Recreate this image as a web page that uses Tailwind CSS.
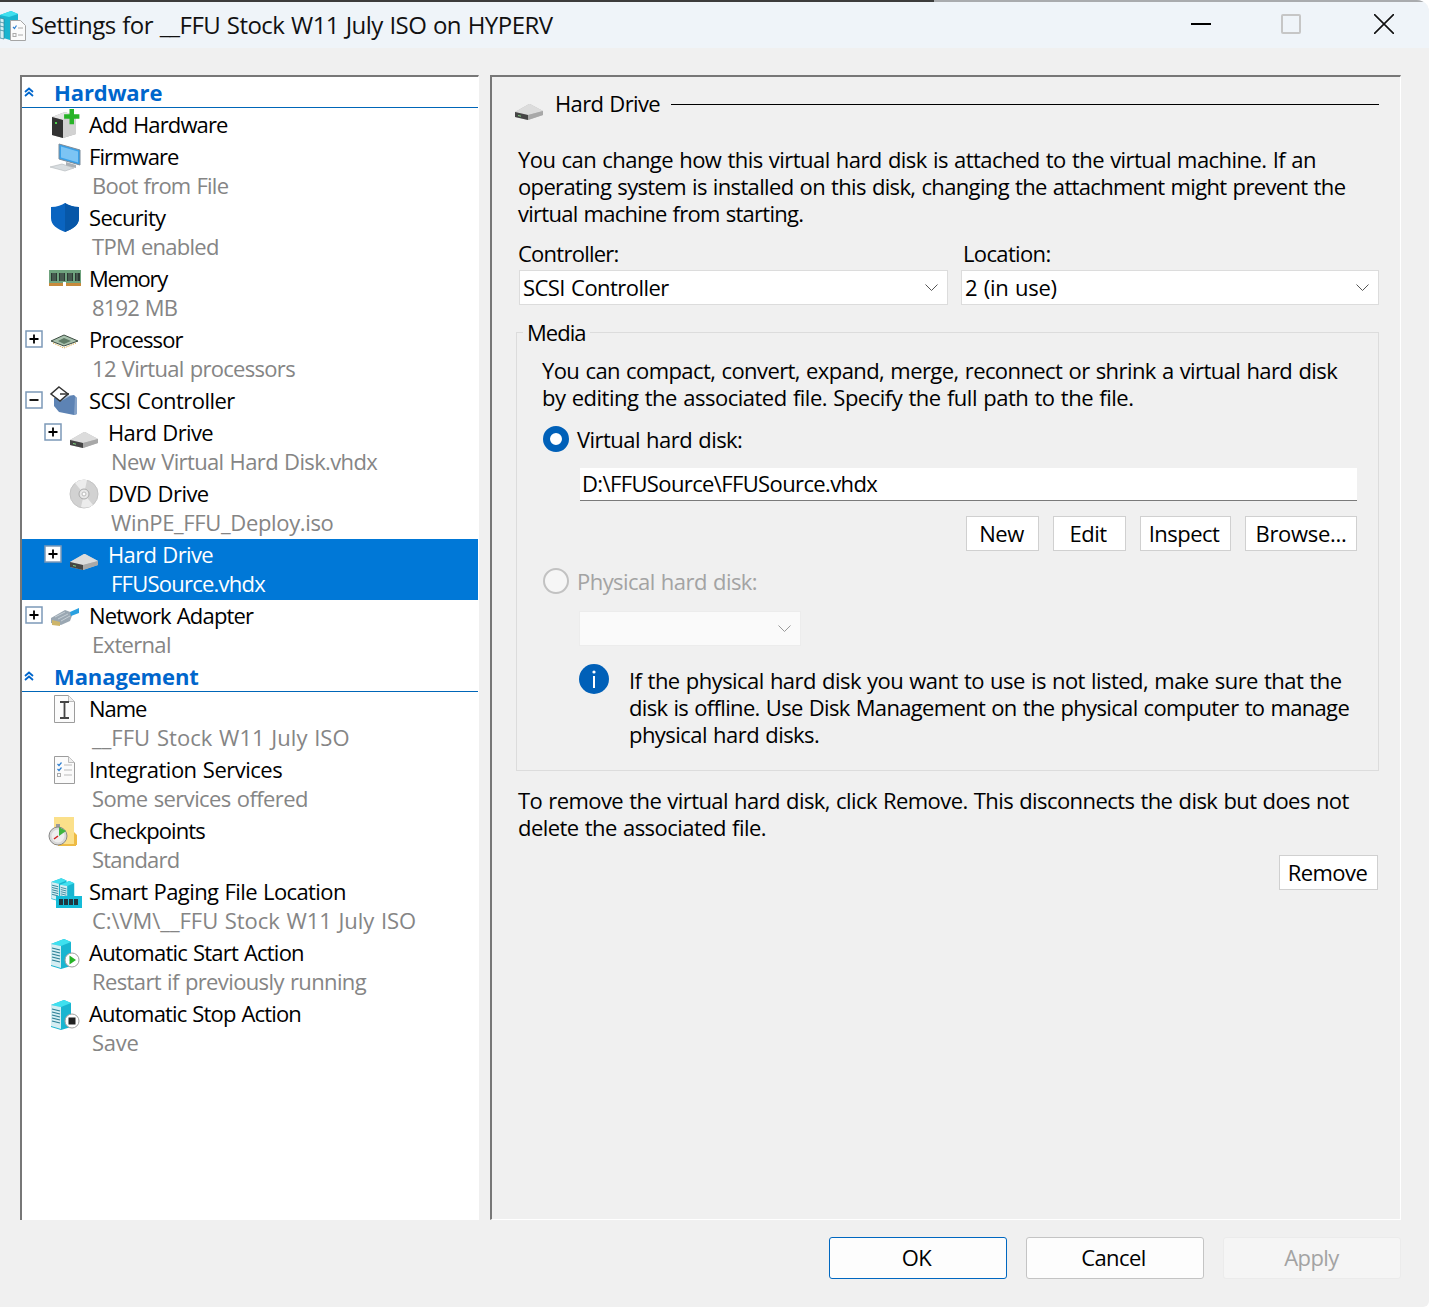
<!DOCTYPE html>
<html lang="en">

<head>
    <meta charset="UTF-8">
    <title>Settings for __FFU Stock W11 July ISO on HYPERV</title>
    <script src="https://cdn.jsdelivr.net/npm/@tailwindcss/browser@4"></script>
</head>

<body class="bg-white font-['Open_Sans',sans-serif] text-[22px] tracking-[-0.55px] [word-spacing:1px] text-black">
    <!-- shared icons -->
    <svg class="hidden">
        <symbol id="plus" viewBox="0 0 18 18">
            <rect x="1" y="1" width="16" height="16" fill="#fff" stroke="#7c99b8" stroke-width="1.5" />
            <path d="M4.5 9h9M9 4.5v9" stroke="#000" stroke-width="1.8" />
        </symbol>
        <symbol id="minus" viewBox="0 0 18 18">
            <rect x="1" y="1" width="16" height="16" fill="#fff" stroke="#7c99b8" stroke-width="1.5" />
            <path d="M4.5 9h9" stroke="#000" stroke-width="1.8" />
        </symbol>
        <symbol id="hdd" viewBox="0 0 34 34">
            <path d="M3 24l14-8h1l13 7v4l-15 5-13-3z" fill="#bdbdbd" />
            <path d="M3 24l14-8h1l13 7-15 4z" fill="#dcdcdc" />
            <path d="M3 24l13 3v5L3 29z" fill="#454545" />
            <path d="M16 27l15-4v4l-15 5z" fill="#a8a8a8" />
            <path d="M6 27.500l3 .7" stroke="#7fd07f" stroke-width="1" />
        </symbol>
        <symbol id="server" viewBox="0 0 34 34">
            <path d="M3 8l13-5 7 3v24l-10 3-10-3z" fill="#19b5d0" />
            <path d="M3 8l13-5 7 3-10 4z" fill="#3fe0ef" />
            <path d="M3 8l10 2v22L3 29z" fill="#d5eef3" />
            <path d="M4 12l8 2M4 15l8 2M4 18l8 2M4 21l8 2M4 24l8 2" stroke="#2b7f95" stroke-width="1.2" />
        </symbol>
        <symbol id="doc" viewBox="0 0 34 34">
            <path d="M6.5 3.5h14l6 6v21h-20z" fill="#fbfbfb" stroke="#9c9c9c" />
            <path d="M20.5 3.5v6h6" fill="#eee" stroke="#bbb" />
        </symbol>
    </svg>

    <div class="w-[1429px] h-[1307px] bg-[#f0f0f0] rounded-tr-[12px] rounded-br-[6px] overflow-hidden flex flex-col">
        <!-- title bar -->
        <div class="h-[48px] bg-[#eff4f9] border-t-2 border-[#a9abae] relative flex items-center">
            <div class="absolute left-0 -top-[2px] w-[934px] h-[2px] bg-[#3c3c3c]"></div>
            <svg class="w-[27px] h-[32px] ml-0 -mb-[3px] shrink-0" viewBox="0 0 27 32">
                <path d="M0 4l11-4 7 3v24l-8 2-10-3z" fill="#19b5d0" />
                <path d="M0 4l11-4 7 3-9 3z" fill="#3fe0ef" />
                <path d="M0 7l4 1v20l-4-1zM0 11l4 1M0 15l4 1M0 19l4 1" fill="#d5eef3" stroke="#2b7f95" stroke-width=".7" />
                <path d="M10.500 9.500h10l5 5v15h-15z" fill="#fbfbfb" stroke="#a5a5a5" />
                <path d="M13 16l1.500 1.500 2-3" fill="none" stroke="#2f7fd0" stroke-width="1.200" />
                <path d="M18 17h5M18 24h5" stroke="#aaa" />
                <rect x="13" y="22.500" width="3" height="3" fill="none" stroke="#aaa" />
            </svg>
            <div class="ml-[4px] text-[24px] tracking-[-0.55px] text-[#111]">Settings for __FFU Stock W11 July ISO on HYPERV</div>
            <div class="ml-auto flex items-center">
                <div class="w-[20px] h-[2px] bg-black mr-[70px] -mt-[2px]"></div>
                <div class="w-[20px] h-[20px] border-2 border-[#c6c6c6] rounded-[2px] mr-[73px] -mt-[2px]"></div>
                <svg class="w-[20px] h-[20px] mr-[35px] -mt-[2px]" viewBox="0 0 20 20">
                    <path d="M0 0l20 20M20 0L0 20" stroke="#111" stroke-width="1.600" />
                </svg>
            </div>
        </div>

        <!-- panels -->
        <div class="flex gap-[11px] pl-[20px] pt-[27px]">
            <!-- left tree -->
            <div class="w-[459px] h-[1145px] bg-white border-l-2 border-t-2 border-r border-l-[#777] border-t-[#777] border-r-white leading-[30px]">
                <div class="h-[32px] pb-[1px]">
                    <div class="h-[31px] border-b border-[#0066b8] flex items-center">
                        <svg class="w-[10px] h-[10px] ml-[2px]" viewBox="0 0 10 10">
                            <path d="M1 5l4-3.500L9 5M1 9l4-3.500L9 9" fill="none" stroke="#0066cc" stroke-width="1.800" />
                        </svg>
                        <div class="ml-[20px] font-bold text-[#0066cc] tracking-[-0.1px]">Hardware</div>
                    </div>
                </div>

                <div class="h-[32px] flex items-center pl-[26px]">
                    <svg class="w-[34px] h-[34px] shrink-0" viewBox="0 0 34 34">
                        <path d="M4 9l13-5 11 4v18l-13 4-11-3z" fill="#a8a8a8" />
                        <path d="M4 9l13-5 11 4-13 4z" fill="#e4e4e4" />
                        <path d="M15 12l13-4v18l-13 4z" fill="#d2d2d2" />
                        <path d="M4 9l11 3v18L4 27z" fill="#333" />
                        <rect x="7" y="14" width="2" height="2" fill="#4cd04c" />
                        <path d="M25 1h5v6h6v5h-6v6h-5v-6h-6V7h6z" fill="#27b427" transform="translate(-1 0) scale(.9)" />
                    </svg>
                    <div class="ml-[7px] pb-[2px] tracking-[-0.88px]">Add Hardware</div>
                </div>

                <div class="h-[61px]">
                    <div class="h-[32px] flex items-center pl-[26px]">
                        <svg class="w-[34px] h-[34px] shrink-0" viewBox="0 0 34 34">
                            <path d="M11 4l21 6v15l-21-6z" fill="#39a0e8" stroke="#7d8c99" />
                            <path d="M13 6.500l17 5v11l-17-5z" fill="#7cc4f4" />
                            <path d="M18 22l10 3v3l-10-2z" fill="#aab0b5" />
                            <path d="M2 27l12-3 12 4-9 3z" fill="#d8dde0" stroke="#b0b5b8" stroke-width=".6" />
                        </svg>
                        <div class="ml-[7px] pb-[2px] tracking-[-0.92px]">Firmware</div>
                    </div>
                    <div class="h-[26px] leading-[24px] pl-[70px] text-[#858585] tracking-[-0.75px]">Boot from File</div>
                </div>

                <div class="h-[61px]">
                    <div class="h-[32px] flex items-center pl-[26px]">
                        <svg class="w-[34px] h-[34px] shrink-0" viewBox="0 0 34 34">
                            <path d="M17 2c3 2 8 4 14 4v11c0 7-6 11-14 14C9 28 3 24 3 17V6c6 0 11-2 14-4z" fill="#0a64c0" />
                            <path d="M17 2c3 2 8 4 14 4v11c0 7-6 11-14 14z" fill="#0757a8" />
                        </svg>
                        <div class="ml-[7px] pb-[2px] tracking-[-0.68px]">Security</div>
                    </div>
                    <div class="h-[26px] leading-[24px] pl-[70px] text-[#858585] tracking-[-0.73px]">TPM enabled</div>
                </div>

                <div class="h-[61px]">
                    <div class="h-[32px] flex items-center pl-[26px]">
                        <svg class="w-[34px] h-[34px] shrink-0" viewBox="0 0 34 34">
                            <rect x="1" y="8" width="32" height="16" fill="#6fa37e" />
                            <rect x="1" y="21" width="32" height="3" fill="#c78a3c" />
                            <path d="M3 11h6v8H3zM11 11h6v8h-6zM19 11h6v8h-6zM27 11h5v8h-5z" fill="#2c3a33" />
                            <path d="M5 11v8M7 11v8M13 11v8M15 11v8M21 11v8M23 11v8M29 11v8" stroke="#7a9a85" stroke-width=".7" />
                            <rect x="15" y="20" width="3" height="4" fill="#fff" />
                        </svg>
                        <div class="ml-[7px] pb-[2px] tracking-[-1.3px]">Memory</div>
                    </div>
                    <div class="h-[26px] leading-[24px] pl-[70px] text-[#858585] tracking-[-0.85px]">8192 MB</div>
                </div>

                <div class="h-[61px]">
                    <div class="h-[32px] flex items-center pl-[3px]">
                        <svg class="w-[18px] h-[18px] -mt-[2px] shrink-0"><use href="#plus" /></svg>
                        <svg class="w-[34px] h-[34px] ml-[5px] shrink-0" viewBox="0 0 34 34">
                            <path d="M3 18l13-6 14 6-14 5z" fill="#a9c2ae" stroke="#3d4d42" />
                            <path d="M10 18l6-3 7 3-7 3z" fill="#5f7c66" />
                            <path d="M5 20l11 5 12-5" fill="none" stroke="#d0a030" stroke-dasharray="1 1" />
                        </svg>
                        <div class="ml-[7px] pb-[2px] tracking-[-0.88px]">Processor</div>
                    </div>
                    <div class="h-[26px] leading-[24px] pl-[70px] text-[#858585] tracking-[-0.7px]">12 Virtual processors</div>
                </div>

                <div class="h-[32px] flex items-center pl-[3px]">
                    <svg class="w-[18px] h-[18px] -mt-[2px] shrink-0"><use href="#minus" /></svg>
                    <svg class="w-[34px] h-[34px] ml-[5px] shrink-0" viewBox="0 0 34 34">
                        <path d="M6 14l20-3 3 3v16l-3 1-15-3-5-6z" fill="#5d83b4" />
                        <path d="M27 13l2 1v16l-3 1z" fill="#86a3c8" />
                        <path d="M14 9l8 3-9 5z" fill="#a9c0da" />
                        <path d="M11 3l9 7-8 7-9-7z" fill="#fff" stroke="#333" stroke-width="1.500" />
                        <path d="M12 10h9" stroke="#333" stroke-width="1.500" />
                    </svg>
                    <div class="ml-[7px] pb-[2px]">SCSI Controller</div>
                </div>

                <div class="h-[61px]">
                    <div class="h-[32px] flex items-center pl-[22px]">
                        <svg class="w-[18px] h-[18px] -mt-[2px] shrink-0"><use href="#plus" /></svg>
                        <svg class="w-[34px] h-[34px] ml-[5px] shrink-0"><use href="#hdd" /></svg>
                        <div class="ml-[7px] pb-[2px] tracking-[-0.65px]">Hard Drive</div>
                    </div>
                    <div class="h-[26px] leading-[24px] pl-[89px] text-[#858585] tracking-[-0.63px]">New Virtual Hard Disk.vhdx</div>
                </div>

                <div class="h-[61px]">
                    <div class="h-[32px] flex items-center pl-[45px]">
                        <svg class="w-[34px] h-[34px] shrink-0" viewBox="0 0 34 34">
                            <circle cx="17" cy="17" r="14" fill="#d2d2d2" stroke="#c4c4c4" />
                            <path d="M17 17L8 6a14 14 0 0 1 12-3z" fill="#ececec" />
                            <path d="M17 17l9 11a14 14 0 0 1-12 2z" fill="#ececec" />
                            <circle cx="17" cy="17" r="5" fill="#e8e8e8" stroke="#aaa" />
                            <circle cx="17" cy="17" r="2" fill="#fff" stroke="#bbb" />
                        </svg>
                        <div class="ml-[7px] pb-[2px]">DVD Drive</div>
                    </div>
                    <div class="h-[26px] leading-[24px] pl-[89px] text-[#858585] tracking-[-0.35px]">WinPE_FFU_Deploy.iso</div>
                </div>

                <div class="h-[61px] bg-[#0078d7] text-white">
                    <div class="h-[32px] flex items-center pl-[22px]">
                        <svg class="w-[18px] h-[18px] -mt-[2px] shrink-0"><use href="#plus" /></svg>
                        <svg class="w-[34px] h-[34px] ml-[5px] shrink-0"><use href="#hdd" /></svg>
                        <div class="ml-[7px] pb-[2px] tracking-[-0.65px]">Hard Drive</div>
                    </div>
                    <div class="h-[26px] leading-[24px] pl-[89px] tracking-[-0.76px]">FFUSource.vhdx</div>
                </div>

                <div class="h-[61px]">
                    <div class="h-[32px] flex items-center pl-[3px]">
                        <svg class="w-[18px] h-[18px] -mt-[2px] shrink-0"><use href="#plus" /></svg>
                        <svg class="w-[34px] h-[34px] ml-[5px] shrink-0" viewBox="0 0 34 34">
                            <path d="M3 19l14-8 8 3-3 8-9 4-10-2z" fill="#9aa7b2" />
                            <path d="M7 18l10-5M10 20l10-5M13 22l9-5" stroke="#c5ced5" />
                            <path d="M4 21l8 2v4l-8-1z" fill="#cdb56a" />
                            <path d="M22 13l9-4v5l-8 3z" fill="#2aa0e0" />
                        </svg>
                        <div class="ml-[7px] pb-[2px] tracking-[-0.82px]">Network Adapter</div>
                    </div>
                    <div class="h-[26px] leading-[24px] pl-[70px] text-[#858585] tracking-[-0.68px]">External</div>
                </div>

                <div class="h-[32px] pb-[1px]">
                    <div class="h-[31px] border-b border-[#0066b8] flex items-center">
                        <svg class="w-[10px] h-[10px] ml-[2px]" viewBox="0 0 10 10">
                            <path d="M1 5l4-3.500L9 5M1 9l4-3.500L9 9" fill="none" stroke="#0066cc" stroke-width="1.800" />
                        </svg>
                        <div class="ml-[20px] font-bold text-[#0066cc] tracking-[-0.1px]">Management</div>
                    </div>
                </div>

                <div class="h-[61px]">
                    <div class="h-[32px] flex items-center pl-[26px]">
                        <svg class="w-[34px] h-[34px] shrink-0" viewBox="0 0 34 34">
                            <use href="#doc" />
                            <path d="M12 10h9M12 26h9M16.500 10v16" stroke="#444" stroke-width="1.800" />
                        </svg>
                        <div class="ml-[7px] pb-[2px] tracking-[-1.05px]">Name</div>
                    </div>
                    <div class="h-[26px] leading-[24px] pl-[70px] text-[#858585] tracking-[0.03px]">__FFU Stock W11 July ISO</div>
                </div>

                <div class="h-[61px]">
                    <div class="h-[32px] flex items-center pl-[26px]">
                        <svg class="w-[34px] h-[34px] shrink-0" viewBox="0 0 34 34">
                            <use href="#doc" />
                            <path d="M9.500 11l1.500 1.500 2.500-3M9.500 16l1.500 1.500 2.500-3" fill="none" stroke="#2f7fd0" stroke-width="1.200" />
                            <rect x="9.500" y="20.500" width="3" height="3" fill="none" stroke="#aaa" />
                            <path d="M16 12h8M16 17h8M16 22h8" stroke="#bbb" />
                        </svg>
                        <div class="ml-[7px] pb-[2px] tracking-[-0.5px]">Integration Services</div>
                    </div>
                    <div class="h-[26px] leading-[24px] pl-[70px] text-[#858585] tracking-[-0.6px]">Some services offered</div>
                </div>

                <div class="h-[61px]">
                    <div class="h-[32px] flex items-center pl-[26px]">
                        <svg class="w-[34px] h-[34px] shrink-0" viewBox="0 0 34 34">
                            <path d="M6 3h20v28H6z" fill="#fbe08a" />
                            <path d="M26 18l3 3v10h-3z" fill="#eebb44" />
                            <path d="M10 31h18" stroke="#eebb44" stroke-width="2" />
                            <rect x="8" y="10" width="4" height="3" fill="#999" />
                            <circle cx="10" cy="22" r="9" fill="#d8d8d8" stroke="#888" />
                            <circle cx="10" cy="22" r="6.500" fill="#eeeeee" />
                            <path d="M11 13l7 4-7 5z" fill="#3fb53f" />
                            <path d="M10 22l-4 3" stroke="#d02020" stroke-width="1.500" />
                        </svg>
                        <div class="ml-[7px] pb-[2px] tracking-[-0.91px]">Checkpoints</div>
                    </div>
                    <div class="h-[26px] leading-[24px] pl-[70px] text-[#858585] tracking-[-0.8px]">Standard</div>
                </div>

                <div class="h-[61px]">
                    <div class="h-[32px] flex items-center pl-[26px]">
                        <svg class="w-[34px] h-[34px] shrink-0" viewBox="0 0 34 34">
                            <use href="#server" width="26" height="28" x="1" y="0" />
                            <use href="#server" width="24" height="28" x="10" y="2" />
                            <rect x="8" y="21" width="26" height="12" fill="#15bcd8" />
                            <path d="M11 24h4v6h-4zM16 24h4v6h-4zM21 24h4v6h-4zM26 24h4v6h-4z" fill="#1f3640" />
                        </svg>
                        <div class="ml-[7px] pb-[2px] tracking-[-0.6px]">Smart Paging File Location</div>
                    </div>
                    <div class="h-[26px] leading-[24px] pl-[70px] text-[#858585] tracking-[-0.05px]">C:\VM\__FFU Stock W11 July ISO</div>
                </div>

                <div class="h-[61px]">
                    <div class="h-[32px] flex items-center pl-[26px]">
                        <svg class="w-[34px] h-[34px] shrink-0" viewBox="0 0 34 34">
                            <use href="#server" />
                            <circle cx="24" cy="24" r="7" fill="#fff" stroke="#a0a0a0" />
                            <path d="M21.500 19.500l6.500 4.500-6.500 4.500z" fill="#27b427" />
                        </svg>
                        <div class="ml-[7px] pb-[2px] tracking-[-0.78px]">Automatic Start Action</div>
                    </div>
                    <div class="h-[26px] leading-[24px] pl-[70px] text-[#858585] tracking-[-0.62px]">Restart if previously running</div>
                </div>

                <div class="h-[61px]">
                    <div class="h-[32px] flex items-center pl-[26px]">
                        <svg class="w-[34px] h-[34px] shrink-0" viewBox="0 0 34 34">
                            <use href="#server" />
                            <circle cx="24" cy="24" r="7" fill="#fff" stroke="#a0a0a0" />
                            <rect x="20.500" y="20.500" width="7" height="7" fill="#222" />
                        </svg>
                        <div class="ml-[7px] pb-[2px] tracking-[-0.84px]">Automatic Stop Action</div>
                    </div>
                    <div class="h-[26px] leading-[24px] pl-[70px] text-[#858585] tracking-[-0.3px]">Save</div>
                </div>
            </div>

            <!-- right details -->
            <div class="w-[911px] h-[1145px] bg-[#f0f0f0] border-l-2 border-t-2 border-r border-b border-t-[#777] border-l-[#777] border-r-white border-b-white pl-[26px] pr-[21px] pt-[12px] leading-[27px]">
                <div class="h-[30px] flex items-center">
                    <svg class="w-[34px] h-[34px] -ml-[6px] mt-[1px] shrink-0"><use href="#hdd" /></svg>
                    <div class="ml-[9px] mr-[11px] pb-[2px] tracking-[-0.65px]">Hard Drive</div>
                    <div class="flex-1 h-px bg-black"></div>
                </div>

                <p class="mt-[27px]">You can change how this virtual hard disk is attached to the virtual machine. If an<br><span class="tracking-[-0.65px]">operating system is installed on this disk, changing the attachment might prevent the</span><br><span class="tracking-[-0.72px]">virtual machine from starting.</span></p>

                <div class="flex mt-[13px]">
                    <div class="w-[445px] tracking-[-0.75px]">Controller:</div>
                    <div class="tracking-[-0.65px]">Location:</div>
                </div>

                <div class="flex mt-[3px] ml-px">
                    <div class="w-[429px] h-[35px] bg-white border border-[#dcdcdc] flex items-center justify-between pl-[3px] pr-[9px]">
                        <span>SCSI Controller</span>
                        <svg class="w-[13px] h-[8px]" viewBox="0 0 13 8"><path d="M.5.500l6 6 6-6" fill="none" stroke="#555" /></svg>
                    </div>
                    <div class="w-[418px] ml-[13px] h-[35px] bg-white border border-[#dcdcdc] flex items-center justify-between pl-[3px] pr-[9px]">
                        <span class="tracking-[-0.25px]">2 (in use)</span>
                        <svg class="w-[13px] h-[8px]" viewBox="0 0 13 8"><path d="M.5.500l6 6 6-6" fill="none" stroke="#555" /></svg>
                    </div>
                </div>

                <!-- media group -->
                <div class="relative -ml-[2px] mt-[27px] h-[439px] border border-[#dcdcdc] pl-[25px] pr-[21px] pt-[24px]">
                    <div class="absolute left-[6px] -top-[14px] bg-[#f0f0f0] px-[4px] tracking-[-0.95px]">Media</div>
                    <p><span class="tracking-[-0.58px]">You can compact, convert, expand, merge, reconnect or shrink a virtual hard disk</span><br><span class="tracking-[-0.49px]">by editing the associated file. Specify the full path to the file.</span></p>

                    <div class="flex items-center mt-[13px] h-[30px]">
                        <div class="w-[26px] h-[26px] ml-px rounded-full border-[7px] border-[#0060b8] bg-white shrink-0"></div>
                        <div class="ml-[8px] pt-[1px]">Virtual hard disk:</div>
                    </div>

                    <div class="ml-[38px] mt-[14px] h-[33px] bg-white border-b border-[#7a7a7a] pl-[2px] leading-[31px] tracking-[-0.62px]">D:\FFUSource\FFUSource.vhdx</div>

                    <div class="flex justify-end gap-[14px] mt-[15px]">
                        <div class="w-[73px] h-[35px] bg-white border border-[#d0d0d0] flex items-center justify-center pr-[2px]">New</div>
                        <div class="w-[73px] h-[35px] bg-white border border-[#d0d0d0] flex items-center justify-center pr-[3px]">Edit</div>
                        <div class="w-[91px] h-[35px] bg-white border border-[#d0d0d0] flex items-center justify-center pr-[3px]">Inspect</div>
                        <div class="w-[112px] h-[35px] bg-white border border-[#d0d0d0] flex items-center justify-center tracking-[-0.3px]">Browse...</div>
                    </div>

                    <div class="flex items-center mt-[15px] h-[30px]">
                        <div class="w-[26px] h-[26px] ml-px rounded-full border-2 border-[#c2c2c2] bg-[#f6f6f6] shrink-0"></div>
                        <div class="ml-[8px] text-[#a3a3a3]">Physical hard disk:</div>
                    </div>

                    <div class="ml-[37px] mt-[15px] w-[222px] h-[35px] bg-[#fafafa] border border-[#ececec] flex items-center justify-end pr-[9px]">
                        <svg class="w-[13px] h-[8px]" viewBox="0 0 13 8"><path d="M.5.500l6 6 6-6" fill="none" stroke="#999" /></svg>
                    </div>

                    <div class="flex mt-[18px]">
                        <svg class="w-[30px] h-[30px] ml-[37px] shrink-0" viewBox="0 0 30 30">
                            <circle cx="15" cy="15" r="15" fill="#0060b8" />
                            <circle cx="15" cy="8" r="1.600" fill="#fff" />
                            <rect x="14" y="12" width="2" height="12" fill="#fff" />
                        </svg>
                        <p class="ml-[20px] mt-[3px]">If the physical hard disk you want to use is not listed, make sure that the<br><span class="tracking-[-0.66px]">disk is offline. Use Disk Management on the physical computer to manage</span><br>physical hard disks.</p>
                    </div>
                </div>

                <p class="mt-[16px]"><span class="tracking-[-0.58px]">To remove the virtual hard disk, click Remove. This disconnects the disk but does not</span><br>delete the associated file.</p>

                <div class="flex justify-end mt-[14px] mr-px">
                    <div class="w-[99px] h-[35px] bg-white border border-[#d0d0d0] flex items-center justify-center pr-[2px]">Remove</div>
                </div>
            </div>
        </div>

        <!-- dialog buttons -->
        <div class="flex justify-end gap-[19px] pr-[28px] pt-[17px]">
            <div class="w-[178px] h-[42px] bg-[#fdfdfd] border border-[#0067c0] rounded-[3px] flex items-center justify-center pb-[2px] pr-[3px]">OK</div>
            <div class="w-[178px] h-[42px] bg-[#fdfdfd] border border-[#c4c4c4] rounded-[3px] flex items-center justify-center pb-[2px] pr-[3px]">Cancel</div>
            <div class="w-[178px] h-[42px] bg-[#f5f5f5] border border-[#ebebeb] rounded-[3px] flex items-center justify-center pb-[2px] pr-[1px] text-[#a3a3a3]">Apply</div>
        </div>
    </div>
</body>

</html>
